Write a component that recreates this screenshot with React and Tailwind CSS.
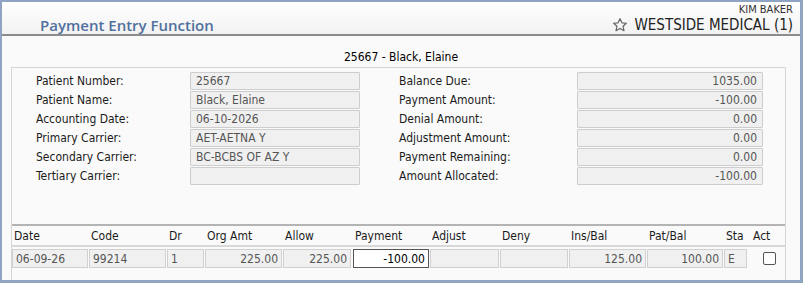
import React from 'react';

const leftFields = [
    { label: 'Patient Number:', value: '25667' },
    { label: 'Patient Name:', value: 'Black, Elaine' },
    { label: 'Accounting Date:', value: '06-10-2026' },
    { label: 'Primary Carrier:', value: 'AET-AETNA Y' },
    { label: 'Secondary Carrier:', value: 'BC-BCBS OF AZ Y' },
    { label: 'Tertiary Carrier:', value: '' },
];

const rightFields = [
    { label: 'Balance Due:', value: '1035.00' },
    { label: 'Payment Amount:', value: '-100.00' },
    { label: 'Denial Amount:', value: '0.00' },
    { label: 'Adjustment Amount:', value: '0.00' },
    { label: 'Payment Remaining:', value: '0.00' },
    { label: 'Amount Allocated:', value: '-100.00' },
];

// ancho de cada columna (incluye el hueco de 1px)
const columnas = [
    { titulo: 'Date', w: 'w-[77px]', valor: '06-09-26' },
    { titulo: 'Code', w: 'w-[78px]', valor: '99214' },
    { titulo: 'Dr', w: 'w-[38px]', valor: '1' },
    { titulo: 'Org Amt', w: 'w-[78px]', valor: '225.00', right: true },
    { titulo: 'Allow', w: 'w-[70px]', valor: '225.00', right: true, pr: 'pr-[2px]' },
    { titulo: 'Payment', w: 'w-[77px]', valor: '-100.00', right: true, editable: true },
    { titulo: 'Adjust', w: 'w-[70px]', valor: '' },
    { titulo: 'Deny', w: 'w-[69px]', valor: '' },
    { titulo: 'Ins/Bal', w: 'w-[78px]', valor: '125.00', right: true },
    { titulo: 'Pat/Bal', w: 'w-[77px]', valor: '100.00', right: true },
    { titulo: 'Sta', w: 'w-[24px]', valor: 'E' },
];

const Campo = ({ value, right, width }) => (
    <div
        className={`h-[18px] ${width} bg-[#f0f0f0] border border-[#cdcdcd] rounded-[1px] px-[5px] flex items-center text-[#555] ${right ? 'justify-end' : ''}`}
    >
        {value}
    </div>
);

const Estrella = () => (
    <svg width="16" height="16" viewBox="0 0 24 24" fill="none" stroke="#666" strokeWidth="1.8" strokeLinejoin="round">
        <path d="M12 2.5l2.9 6.2 6.6.7-4.9 4.5 1.4 6.6L12 17.2l-6 3.3 1.4-6.6-4.9-4.5 6.6-.7z" />
    </svg>
);

export default function App() {
    return (
        <div
            className="w-[803px] h-[283px] overflow-hidden flex flex-col border-l-2 border-t-2 border-r-[3px] border-b-[3px] border-[#8fa3c2] bg-[#fafafa] text-[12px] leading-[14px] text-[#1a1a1a]"
            style={{ fontFamily: '"DejaVu Sans Condensed", "DejaVu Sans", sans-serif' }}
        >
            {/* cabecera */}
            <div className="h-[34px] shrink-0 flex justify-between items-end bg-gradient-to-b from-white to-[#f2f2f2] border-b-2 border-[#8c8c8c] pl-[38px] pr-[7px]">
                <div
                    className="text-[15px] font-semibold text-[#50709d] leading-[20px] -mb-[1px]"
                    style={{ fontFamily: '"Open Sans", sans-serif' }}
                >
                    Payment Entry Function
                </div>
                <div className="flex flex-col items-end">
                    <div className="text-[11px] leading-[13px] text-[#333]">KIM BAKER</div>
                    <div className="flex items-center gap-[6px] text-[15px] leading-[18px] text-[#222]">
                        <Estrella />
                        <span>WESTSIDE MEDICAL (1)</span>
                    </div>
                </div>
            </div>

            <div className="h-[31px] shrink-0 flex justify-center text-[12px] text-black pt-[14px]">
                25667 - Black, Elaine
            </div>

            {/* panel principal */}
            <div className="flex-1 ml-[9px] mr-[14px] border-t border-l border-r border-[#d6d6d6] bg-[#fafafa] flex flex-col">
                <div className="flex pt-[4px] pl-[24px]">
                    <div className="flex flex-col gap-[1px]">
                        {leftFields.map((f) => (
                            <div key={f.label} className="flex items-center h-[18px]">
                                <div className="w-[154px]">{f.label}</div>
                                <Campo value={f.value} width="w-[170px]" />
                            </div>
                        ))}
                    </div>
                    <div className="flex flex-col gap-[1px] ml-[39px]">
                        {rightFields.map((f) => (
                            <div key={f.label} className="flex items-center h-[18px]">
                                <div className="w-[178px]">{f.label}</div>
                                <Campo value={f.value} right width="w-[186px]" />
                            </div>
                        ))}
                    </div>
                </div>

                {/* tabla */}
                <div className="mt-[39px] border-t-2 border-[#b4b4b4]">
                    <div className="flex h-[21px] items-center border-b-2 border-[#d8d8d8]">
                        {columnas.map((c) => (
                            <div key={c.titulo} className={`${c.w} pl-[2px]`}>{c.titulo}</div>
                        ))}
                        <div className="pl-[5px]">Act</div>
                    </div>
                    <div className="flex items-center pt-[2px]">
                        {columnas.map((c) => (
                            <div key={c.titulo} className={`${c.w} ${c.pr || 'pr-[1px]'}`}>
                                {c.editable ? (
                                    <div className="h-[19px] bg-white border border-[#555] px-[3px] flex items-center justify-end text-black">
                                        {c.valor}
                                    </div>
                                ) : (
                                    <div
                                        className={`h-[19px] bg-[#f0f0f0] border border-[#d0d0d0] px-[3px] flex items-center text-[#555] ${c.right ? 'justify-end' : ''}`}
                                    >
                                        {c.valor}
                                    </div>
                                )}
                            </div>
                        ))}
                        <div className="flex-1 flex justify-center pl-[6px]">
                            <div className="w-[13px] h-[13px] border border-[#555] rounded-[2px] bg-white" />
                        </div>
                    </div>
                </div>
            </div>
        </div>
    );
}
